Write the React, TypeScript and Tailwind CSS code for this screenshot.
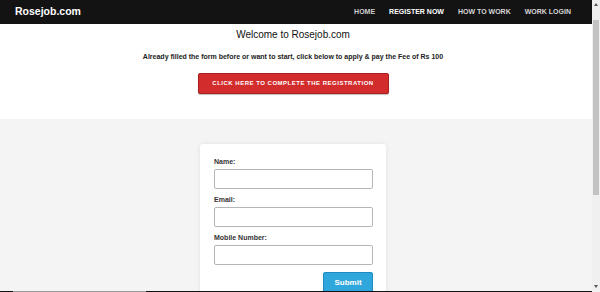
import React from "react";

const font = { fontFamily: '"Liberation Sans", Arial, sans-serif' };

function Field({ label }: { label: string }) {
  return (
    <div className="flex shrink-0 flex-col">
      <label className="h-[10px] text-[7px] leading-[10px] font-bold text-[#333]">{label}</label>
      <input className="mt-[2px] mb-[6px] h-[20px] w-full rounded-[2px] border border-[#b5b5b5] bg-white outline-none" />
    </div>
  );
}

export default function App() {
  return (
    <div className="relative flex h-[292px] w-[600px] overflow-hidden bg-white" style={font}>
      <div className="flex min-h-0 flex-1 flex-col overflow-hidden">
        <nav className="flex h-[24px] shrink-0 items-center justify-between bg-[#131313] pl-[15px] pr-[21px]">
          <span className="text-[10.5px] font-bold text-white">Rosejob.com</span>
          <div className="flex items-center gap-[14px] text-[7px] font-bold">
            <span className="text-[#cfcfcf]">HOME</span>
            <span className="text-white">REGISTER NOW</span>
            <span className="text-[#d6d6d6]">HOW TO WORK</span>
            <span className="text-[#d6d6d6]">WORK LOGIN</span>
          </div>
        </nav>
        <section className="flex h-[95px] shrink-0 flex-col items-center pr-[6px] pt-[4px]">
          <h1 className="text-[10px] leading-[14px] text-[#111]">Welcome to Rosejob.com</h1>
          <p className="mt-[10px] text-[7px] leading-[10px] font-bold text-[#222]">
            Already filled the form before or want to start, click below to apply &amp; pay the Fee of Rs 100
          </p>
          <button className="mt-[11px] flex h-[21px] w-[191px] items-center justify-center rounded-[2px] border border-[#a71f1f] bg-[#d32c2c] text-[6px] font-bold tracking-[0.5px] text-white shadow-[0_1px_1px_rgba(0,0,0,0.25)]">
            CLICK HERE TO COMPLETE THE REGISTRATION
          </button>
        </section>
        <section className="flex flex-1 shrink-0 items-start justify-center bg-[#f4f4f4] pr-[6px] pt-[25px]">
          <div className="flex w-[186px] shrink-0 flex-col rounded-[3px] bg-white pb-[10px] pl-[14px] pr-[13px] pt-[13px] shadow-[0_0_4px_rgba(0,0,0,0.08)]">
            <Field label="Name:" />
            <Field label="Email:" />
            <Field label="Mobile Number:" />
            <div className="mt-[1px] flex shrink-0 justify-end">
              <button className="h-[21px] w-[50px] rounded-[2px] border border-[#1f8cc0] bg-[#2fa6dc] text-[8px] font-bold text-white">
                Submit
              </button>
            </div>
          </div>
        </section>
      </div>
      <div className="flex w-[8px] flex-col items-center bg-[#f0f0f0]">
        <div className="mt-[3px] h-0 w-0 border-x-[2px] border-b-[3px] border-x-transparent border-b-[#555]" />
        <div className="mt-[14px] h-[175px] w-[6px] bg-[#c3c3c3]" />
        <div className="flex-1" />
        <div className="mb-[4px] h-0 w-0 border-x-[2px] border-t-[3px] border-x-transparent border-t-[#555]" />
      </div>
      <div className="absolute bottom-0 left-0 flex h-[1px] w-[592px] bg-[#111]">
        <div className="ml-[13px] h-full w-[133px] bg-[#9a9a9a]" />
      </div>
    </div>
  );
}
